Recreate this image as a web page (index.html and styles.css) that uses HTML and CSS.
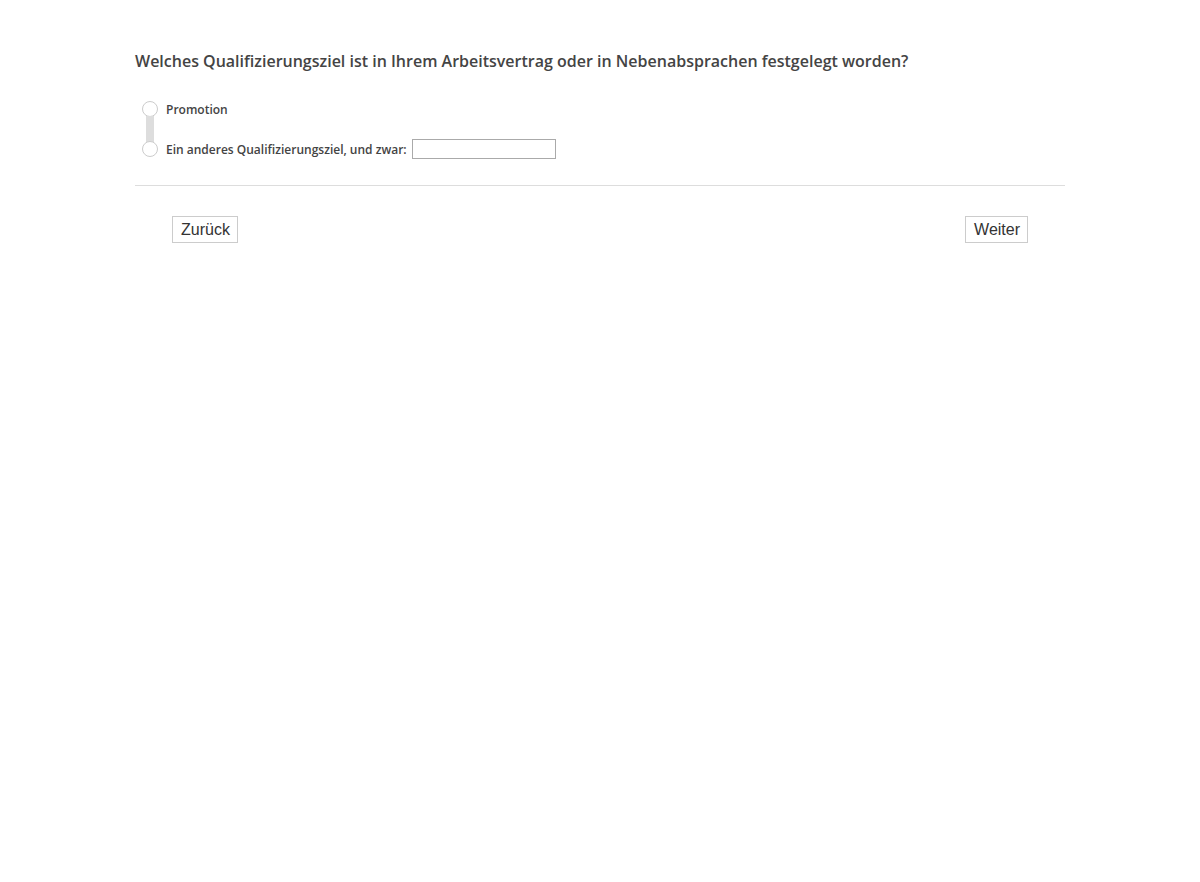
FILE: index.html
```html
<!DOCTYPE html>
<html lang="de">
<head>
<meta charset="utf-8">
<title>Qualifizierungsziel</title>
<link rel="stylesheet" href="styles.css">
</head>
<body>
<main class="page">
  <h1 class="question">Welches Qualifizierungsziel ist in Ihrem Arbeitsvertrag oder in Nebenabsprachen festgelegt worden?</h1>
  <div class="options">
    <label class="option">
      <span class="radio"></span>
      <span class="label">Promotion</span>
    </label>
    <div class="connector"></div>
    <label class="option">
      <span class="radio"></span>
      <span class="label">Ein anderes Qualifizierungsziel, und zwar:</span>
      <input class="other" type="text">
    </label>
  </div>
  <hr class="divider">
  <div class="nav">
    <button class="btn">Zurück</button>
    <button class="btn">Weiter</button>
  </div>
</main>
</body>
</html>
```
FILE: styles.css
```css
html, body {
  margin: 0;
  padding: 0;
  background: #fff;
}
body {
  font-family: "Open Sans", "Liberation Sans", sans-serif;
  color: #444;
}
.page {
  width: 930px;
  margin: 0 0 0 135px;
  padding-top: 49px;
}
.question {
  margin: 0;
  font-size: 16px;
  font-weight: 600;
  line-height: 24px;
  color: #444;
}
.options {
  margin-top: 27px;
  padding-left: 7px;
  display: flex;
  flex-direction: column;
}
.option {
  display: flex;
  align-items: center;
  height: 18px;
}
.radio {
  width: 14px;
  height: 14px;
  border: 1px solid #ccc;
  border-radius: 50%;
  background: #fff;
  flex: none;
}
.connector {
  width: 8px;
  height: 26px;
  margin-left: 4px;
  margin-top: -2px;
  margin-bottom: -2px;
  background: #ddd;
}
.label {
  margin-left: 8px;
  font-size: 12px;
  font-weight: 600;
  color: #444;
}
.other {
  margin: 0 0 0 5px;
  width: 144px;
  height: 20px;
  box-sizing: border-box;
  border: 1px solid #aaa;
  padding: 0;
}
.divider {
  margin: 27px 0 0 0;
  border: 0;
  border-top: 1px solid #ddd;
  height: 0;
}
.nav {
  display: flex;
  justify-content: space-between;
  padding: 30px 37px 0 37px;
}
.btn {
  font-family: "Liberation Sans", Arial, sans-serif;
  font-size: 16px;
  color: #333;
  background: #fff;
  border: 1px solid #ccc;
  height: 27px;
  padding: 0 7px 0 8px;
  margin: 0;
}
```
